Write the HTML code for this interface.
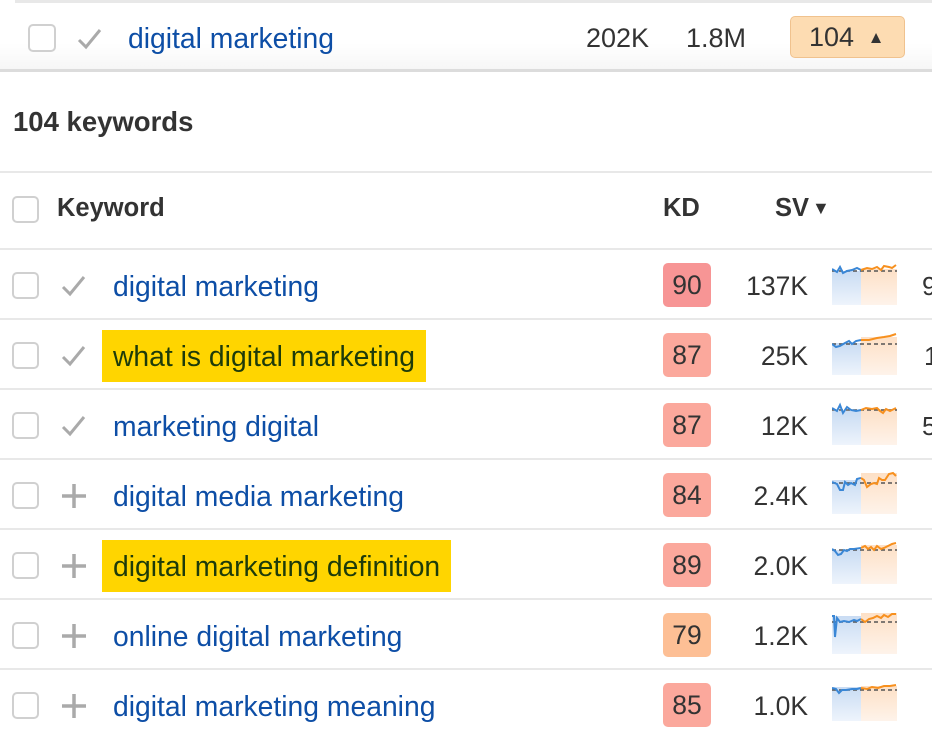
<!DOCTYPE html>
<html><head><meta charset="utf-8"><style>
*{margin:0;padding:0;box-sizing:border-box}
body{width:932px;height:738px;background:#fff;position:relative;overflow:hidden;font-family:"Liberation Sans",Arial,sans-serif;color:#333}
.a{position:absolute}
.cb{position:absolute;width:27px;height:27px;border:2px solid #d0d0d0;border-radius:5px;background:#fff}
.kw{position:absolute;font-size:28.3px;color:#0d4ea6;line-height:34px;white-space:nowrap}
.hl{background:#ffd500;color:#1d3b0a;padding:10px 11px;margin-left:-11px}
.kd{position:absolute;left:663px;width:48px;height:44px;border-radius:5px;font-size:26.5px;line-height:44px;text-align:center;color:#333}
.sv{position:absolute;right:124px;font-size:26.5px;line-height:34px;text-align:right}
.line{position:absolute;left:0;width:932px;height:2px;background:#e8e8e8}
.ico{position:absolute;left:60px}
</style></head><body>
<div class="a" style="left:15px;top:0;width:917px;height:3px;background:#e8e8e8"></div>
<div class="a" style="left:0;top:3px;width:932px;height:67px;background:linear-gradient(#fff 60%,#f6f6f6)"></div>
<div class="a" style="left:0;top:69px;width:932px;height:3px;background:#dcdcdc"></div>
<div class="cb" style="left:28px;top:24px;width:28px;height:28px"></div>
<svg class="a" style="left:76px;top:26px" width="28" height="26"><path d="M3 14 L10 21 L24 4" fill="none" stroke="#aaa" stroke-width="3"/></svg>
<div class="kw" style="left:128px;top:21px">digital marketing</div>
<div class="a" style="left:586px;top:21px;font-size:27px;line-height:34px">202K</div>
<div class="a" style="left:686px;top:21px;font-size:27px;line-height:34px">1.8M</div>
<div class="a" style="left:790px;top:16px;width:115px;height:42px;background:#fddcb2;border:1.5px solid #f0c28e;border-radius:5px;font-size:27px;line-height:40px;padding-left:18px">104 <span style="font-size:17px;position:relative;top:-3px;margin-left:6px">▲</span></div>

<div class="a" style="left:13px;top:106px;font-size:27.5px;font-weight:bold;line-height:32px">104 keywords</div>
<div class="line" style="top:171px"></div>
<div class="cb" style="left:12px;top:196px"></div>
<div class="a" style="left:57px;top:193px;font-size:25.5px;font-weight:bold;line-height:30px">Keyword</div>
<div class="a" style="left:663px;top:193px;font-size:25.5px;font-weight:bold;line-height:30px">KD</div>
<div class="a" style="left:775px;top:193px;font-size:25.5px;font-weight:bold;line-height:30px">SV<span style="font-size:18px;margin-left:3px;position:relative;top:-2px">▼</span></div>
<div class="line" style="top:248px"></div>

<div class="cb" style="left:12px;top:272px"></div>
<svg class="ico" style="top:273px" width="28" height="26"><path d="M3 14 L10 21 L24 4" fill="none" stroke="#aaa" stroke-width="3"/></svg>
<div class="kw" style="left:113px;top:269px">digital marketing</div>
<div class="kd" style="top:263px;background:#f79595">90</div>
<div class="sv" style="top:269px">137K</div>
<div class="a" style="left:922px;top:269px;font-size:26px;line-height:34px">9</div>
<div class="line" style="top:318px"></div>

<div class="cb" style="left:12px;top:342px"></div>
<svg class="ico" style="top:343px" width="28" height="26"><path d="M3 14 L10 21 L24 4" fill="none" stroke="#aaa" stroke-width="3"/></svg>
<div class="kw" style="left:113px;top:339px"><span class="hl">what is digital marketing</span></div>
<div class="kd" style="top:333px;background:#fba89c">87</div>
<div class="sv" style="top:339px">25K</div>
<div class="a" style="left:924px;top:339px;font-size:26px;line-height:34px">1</div>
<div class="line" style="top:388px"></div>

<div class="cb" style="left:12px;top:412px"></div>
<svg class="ico" style="top:413px" width="28" height="26"><path d="M3 14 L10 21 L24 4" fill="none" stroke="#aaa" stroke-width="3"/></svg>
<div class="kw" style="left:113px;top:409px">marketing digital</div>
<div class="kd" style="top:403px;background:#fba89c">87</div>
<div class="sv" style="top:409px">12K</div>
<div class="a" style="left:922px;top:409px;font-size:26px;line-height:34px">5</div>
<div class="line" style="top:458px"></div>

<div class="cb" style="left:12px;top:482px"></div>
<svg class="ico" style="top:482px" width="28" height="28"><path d="M14 2V26M2 14H26" stroke="#aaa" stroke-width="3.5"/></svg>
<div class="kw" style="left:113px;top:479px">digital media marketing</div>
<div class="kd" style="top:473px;background:#fba89c">84</div>
<div class="sv" style="top:479px">2.4K</div>
<div class="line" style="top:528px"></div>

<div class="cb" style="left:12px;top:552px"></div>
<svg class="ico" style="top:552px" width="28" height="28"><path d="M14 2V26M2 14H26" stroke="#aaa" stroke-width="3.5"/></svg>
<div class="kw" style="left:113px;top:549px"><span class="hl">digital marketing definition</span></div>
<div class="kd" style="top:543px;background:#fba89c">89</div>
<div class="sv" style="top:549px">2.0K</div>
<div class="line" style="top:598px"></div>

<div class="cb" style="left:12px;top:622px"></div>
<svg class="ico" style="top:622px" width="28" height="28"><path d="M14 2V26M2 14H26" stroke="#aaa" stroke-width="3.5"/></svg>
<div class="kw" style="left:113px;top:619px">online digital marketing</div>
<div class="kd" style="top:613px;background:#fdbf95">79</div>
<div class="sv" style="top:619px">1.2K</div>
<div class="line" style="top:668px"></div>

<div class="cb" style="left:12px;top:692px"></div>
<svg class="ico" style="top:692px" width="28" height="28"><path d="M14 2V26M2 14H26" stroke="#aaa" stroke-width="3.5"/></svg>
<div class="kw" style="left:113px;top:689px">digital marketing meaning</div>
<div class="kd" style="top:683px;background:#fba89c">85</div>
<div class="sv" style="top:689px">1.0K</div>

<svg class="a" style="left:832px;top:0" width="65" height="738">
<defs>
<linearGradient id="b" x1="0" y1="0" x2="0" y2="1"><stop offset="0" stop-color="#c9dcf3"/><stop offset="1" stop-color="#eef4fc"/></linearGradient>
<linearGradient id="o" x1="0" y1="0" x2="0" y2="1"><stop offset="0" stop-color="#fde0c6"/><stop offset="1" stop-color="#fef3ea"/></linearGradient>
</defs>
<g transform="translate(0,265)">
<rect x="0" y="6" width="29" height="34" fill="url(#b)"/><rect x="29" y="4" width="36" height="36" fill="url(#o)"/>
<line x1="0" y1="6" x2="65" y2="6" stroke="#555" stroke-width="1.5" stroke-dasharray="4 3"/>
<polyline points="0,4 5,7 8,2 11,8 15,6 20,5 25,3 29,5" fill="none" stroke="#3a87d6" stroke-width="2"/>
<polyline points="29,5 35,3 40,4 45,2 49,5 52,1 57,2 60,3 64,0" fill="none" stroke="#f7901e" stroke-width="2"/>
</g>
<g transform="translate(0,335)">
<rect x="0" y="8" width="29" height="32" fill="url(#b)"/><rect x="29" y="2" width="36" height="38" fill="url(#o)"/>
<line x1="0" y1="9" x2="65" y2="9" stroke="#555" stroke-width="1.5" stroke-dasharray="4 3"/>
<polyline points="0,9 4,12 8,11 13,8 17,6 20,9 24,6 29,5" fill="none" stroke="#3a87d6" stroke-width="2"/>
<polyline points="29,5 37,5 45,3 52,2 58,1 64,-1" fill="none" stroke="#f7901e" stroke-width="2"/>
</g>
<g transform="translate(0,405)">
<rect x="0" y="6" width="29" height="34" fill="url(#b)"/><rect x="29" y="4" width="36" height="36" fill="url(#o)"/>
<line x1="0" y1="5" x2="65" y2="5" stroke="#555" stroke-width="1.5" stroke-dasharray="4 3"/>
<polyline points="0,3 5,6 8,0 11,8 15,2 19,5 24,6 29,5" fill="none" stroke="#3a87d6" stroke-width="2"/>
<polyline points="29,5 34,3 40,4 45,3 48,6 51,8 54,4 58,6 64,3" fill="none" stroke="#f7901e" stroke-width="2"/>
</g>
<g transform="translate(0,470)">
<rect x="0" y="10" width="29" height="34" fill="url(#b)"/><rect x="29" y="3" width="36" height="41" fill="url(#o)"/>
<line x1="0" y1="13" x2="65" y2="13" stroke="#555" stroke-width="1.5" stroke-dasharray="4 3"/>
<polyline points="0,12 5,14 8,20 11,20 13,12 16,15 19,13 23,15 25,9 29,8" fill="none" stroke="#3a87d6" stroke-width="2"/>
<polyline points="29,8 32,10 35,17 39,14 42,13 45,14 47,8 50,10 53,10 57,4 61,3 64,6" fill="none" stroke="#f7901e" stroke-width="2"/>
</g>
<g transform="translate(0,540)">
<rect x="0" y="10" width="29" height="34" fill="url(#b)"/><rect x="29" y="5" width="36" height="39" fill="url(#o)"/>
<line x1="0" y1="10" x2="65" y2="10" stroke="#555" stroke-width="1.5" stroke-dasharray="4 3"/>
<polyline points="0,9 3,11 6,15 9,14 12,10 15,11 18,9 22,9 29,8" fill="none" stroke="#3a87d6" stroke-width="2"/>
<polyline points="29,8 33,6 36,9 39,7 42,10 45,6 49,9 52,8 56,6 60,4 64,3" fill="none" stroke="#f7901e" stroke-width="2"/>
</g>
<g transform="translate(0,610)">
<rect x="0" y="6" width="29" height="38" fill="url(#b)"/><rect x="29" y="3" width="36" height="41" fill="url(#o)"/>
<line x1="0" y1="12" x2="65" y2="12" stroke="#555" stroke-width="1.5" stroke-dasharray="4 3"/>
<polyline points="0,6 2,6 3,27 5,8 8,12 12,11 17,12 22,10 25,11 29,9" fill="none" stroke="#3a87d6" stroke-width="2"/>
<polyline points="29,9 33,12 37,9 41,8 45,6 49,8 52,5 56,7 60,4 64,4" fill="none" stroke="#f7901e" stroke-width="2"/>
</g>
<g transform="translate(0,683)">
<rect x="0" y="4" width="29" height="34" fill="url(#b)"/><rect x="29" y="3" width="36" height="35" fill="url(#o)"/>
<line x1="0" y1="7" x2="65" y2="7" stroke="#555" stroke-width="1.5" stroke-dasharray="4 3"/>
<polyline points="0,5 4,6 7,10 10,7 14,7 20,6 25,6 29,5" fill="none" stroke="#3a87d6" stroke-width="2"/>
<polyline points="29,5 35,6 40,4 46,5 52,3 58,3 64,2" fill="none" stroke="#f7901e" stroke-width="2"/>
</g>
</svg>
</body></html>
